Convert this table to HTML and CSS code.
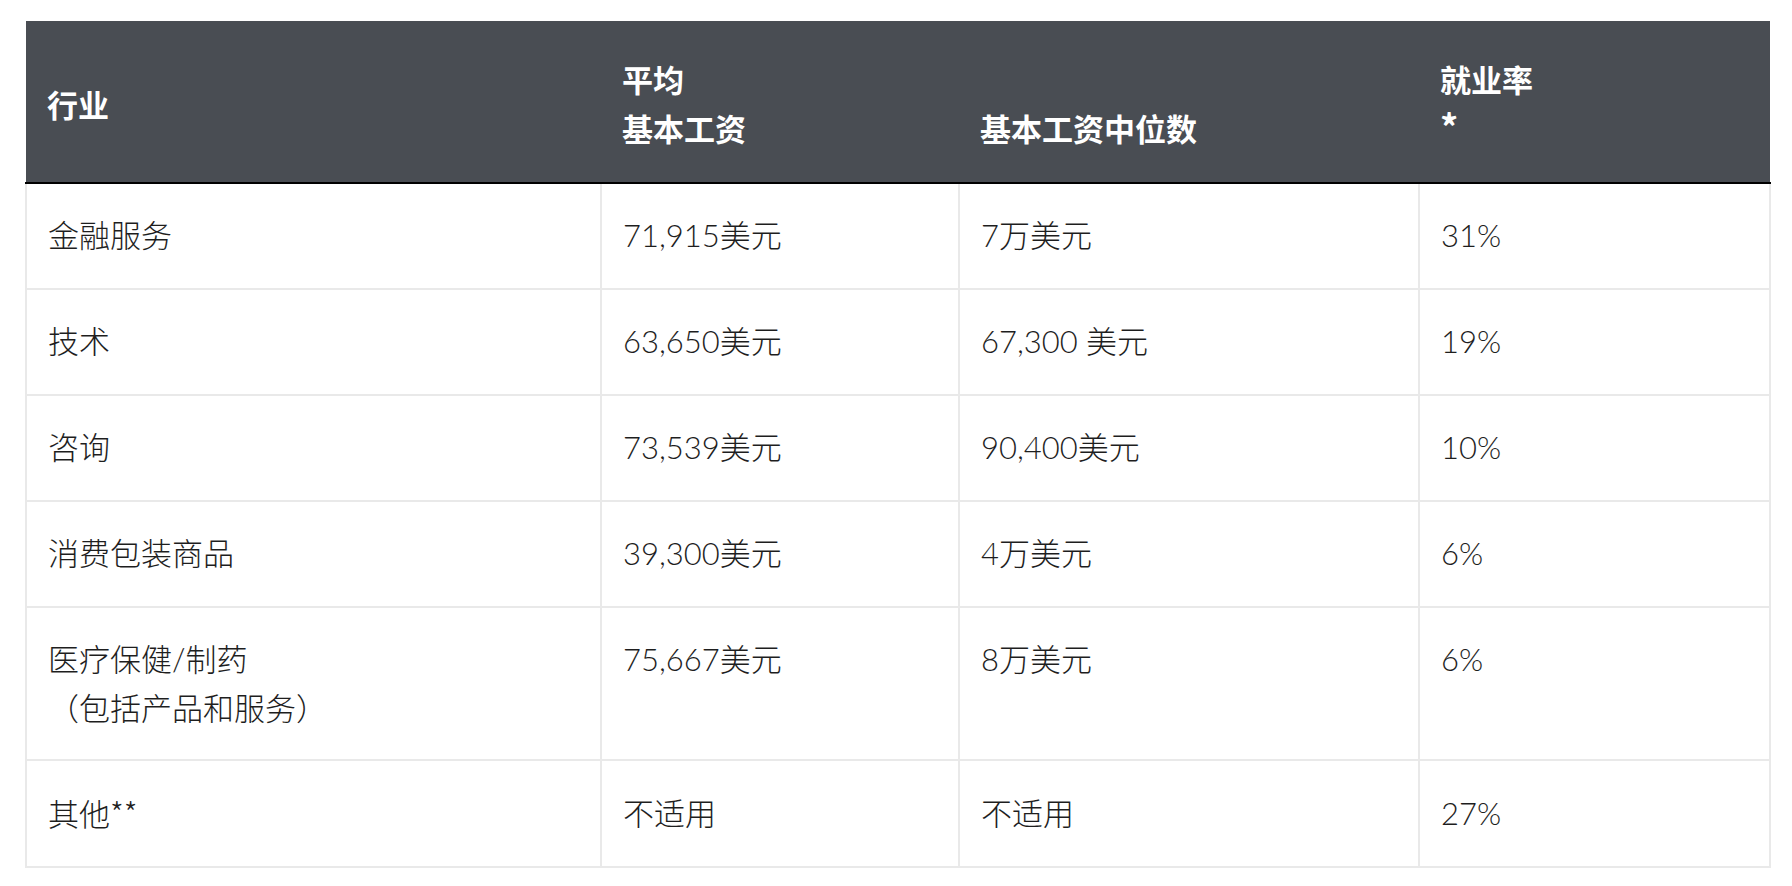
FILE: index.html
```html
<!DOCTYPE html>
<html lang="zh-CN">
<head>
<meta charset="utf-8">
<title>行业薪资</title>
<link rel="stylesheet" href="styles.css">
</head>
<body>
<div class="wrap">
  <table class="salary">
    <colgroup>
      <col class="c1"><col class="c2"><col class="c3"><col class="c4">
    </colgroup>
    <thead>
      <tr>
        <th>行业</th>
        <th>平均<br>基本工资</th>
        <th class="bottom">基本工资中位数</th>
        <th>就业率<br><span class="ast big">*</span></th>
      </tr>
    </thead>
    <tbody>
      <tr><td>金融服务</td><td>71,915美元</td><td>7万美元</td><td>31%</td></tr>
      <tr><td>技术</td><td>63,650美元</td><td>67,300 美元</td><td>19%</td></tr>
      <tr><td>咨询</td><td>73,539美元</td><td>90,400美元</td><td>10%</td></tr>
      <tr><td>消费包装商品</td><td>39,300美元</td><td>4万美元</td><td>6%</td></tr>
      <tr class="top"><td>医疗保健/制药<br>（包括产品和服务）</td><td>75,667美元</td><td>8万美元</td><td>6%</td></tr>
      <tr class="last"><td>其他<span class="ast">**</span></td><td>不适用</td><td>不适用</td><td>27%</td></tr>
    </tbody>
  </table>
</div>
</body>
</html>
```
FILE: styles.css
```css
html, body {
  margin: 0;
  padding: 0;
  background: #ffffff;
}
.wrap {
  padding: 21px 23px 0 25px;
}
.salary {
  width: 1744px;
  border-collapse: collapse;
  table-layout: fixed;
  font-family: Lato, "Noto Sans CJK SC", sans-serif;
  font-size: 31px;
  line-height: 49px;
  color: #1e1e1e;
}
.c1 { width: 575px; }
.c2 { width: 358px; }
.c3 { width: 460px; }
.c4 { width: 351px; }
.salary th {
  background: #494d53;
  color: #ffffff;
  font-family: "Noto Sans CJK SC", Lato, sans-serif;
  font-weight: 700;
  text-align: left;
  vertical-align: middle;
  padding: 33px 21px 30px;
  border-bottom: 2px solid #000000;
}
.salary th.bottom {
  vertical-align: bottom;
}
.salary td {
  font-weight: 300;
  text-align: left;
  vertical-align: middle;
  padding: 27px 21px 28px;
  border: 2px solid #e9e9e9;
}
.salary thead + tbody tr:first-child td {
  border-top: none;
}
.salary tr.top td {
  vertical-align: top;
  padding-bottom: 26px;
}
.salary tr.last td {
  padding-bottom: 27px;
}
.ast {
  font-family: "Noto Sans CJK SC", sans-serif;
}
.ast.big {
  font-size: 36px;
  line-height: 0;
}
```
